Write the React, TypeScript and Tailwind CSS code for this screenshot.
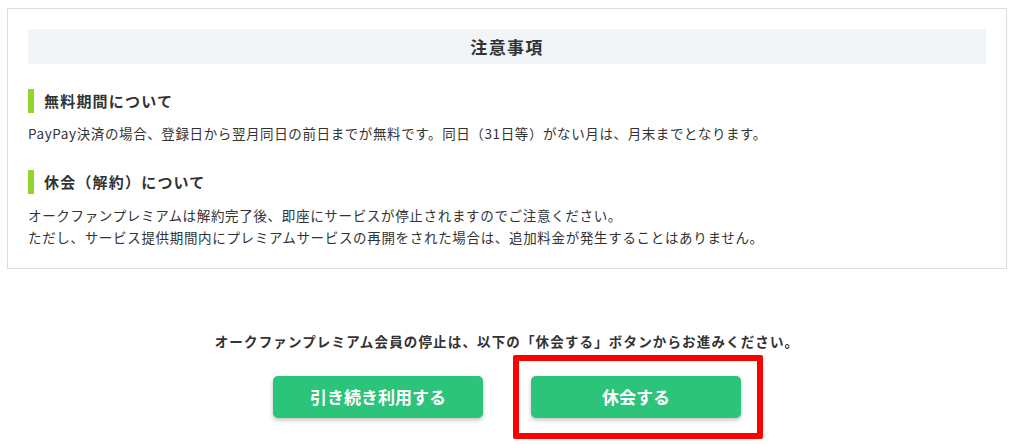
import React from "react";

const font = { fontFamily: '"Noto Sans CJK JP", "Noto Sans", sans-serif' };

function Heading({ children }: { children: React.ReactNode }) {
  return (
    <div className="flex items-center h-[24px]">
      <div className="w-[6px] h-[24px] bg-[#93d52d]" />
      <h3 className="ml-[10px] text-[15px] leading-[24px] font-bold text-[#333] tracking-[0.08em]">{children}</h3>
    </div>
  );
}

export default function App() {
  return (
    <div className="bg-white w-[1014px] h-[444px] overflow-hidden text-[#333]" style={font}>
      <div className="pt-[8px] px-[7px]">
        <div className="border border-[#dddddd] p-[20px]">
          <div className="h-[35px] bg-[#f2f5f8] flex items-center justify-center">
            <h2 className="text-[17px] font-bold tracking-[0.08em] text-[#333]">注意事項</h2>
          </div>
          <div className="mt-[25px]">
            <Heading>無料期間について</Heading>
            <p className="mt-[9px] text-[13.5px] leading-[22px] tracking-[0.045em] text-[#333]">
              PayPay決済の場合、登録日から翌月同日の前日までが無料です。同日（31日等）がない月は、月末までとなります。
            </p>
          </div>
          <div className="mt-[26px]">
            <Heading>休会（解約）について</Heading>
            <p className="mt-[10px] text-[13.5px] leading-[22px] tracking-[0.05em] text-[#333]">
              オークファンプレミアムは解約完了後、即座にサービスが停止されますのでご注意ください。
              <br />
              ただし、サービス提供期間内にプレミアムサービスの再開をされた場合は、追加料金が発生することはありません。
            </p>
          </div>
        </div>
      </div>
      <p className="mt-[62px] text-center text-[13.5px] leading-[20px] font-bold tracking-[0.085em] text-[#333]">
        オークファンプレミアム会員の停止は、以下の「休会する」ボタンからお進みください。
      </p>
      <div className="mt-[25px] flex justify-center gap-[48px]">
        <button className="w-[210px] h-[42px] rounded-[5px] bg-[#2cc37a] text-white text-[17px] font-bold shadow-[0_2px_4px_rgba(0,0,0,0.25)]">
          引き続き利用する
        </button>
        <div className="relative">
          <button className="w-[210px] h-[42px] rounded-[5px] bg-[#2cc37a] text-white text-[17px] font-bold shadow-[0_2px_4px_rgba(0,0,0,0.25)]">
            休会する
          </button>
          <div className="absolute left-[-18px] right-[-22px] top-[-21px] bottom-[-21px] border-[6px] border-[#ff0000] rounded-[2px] pointer-events-none" />
        </div>
      </div>
    </div>
  );
}
